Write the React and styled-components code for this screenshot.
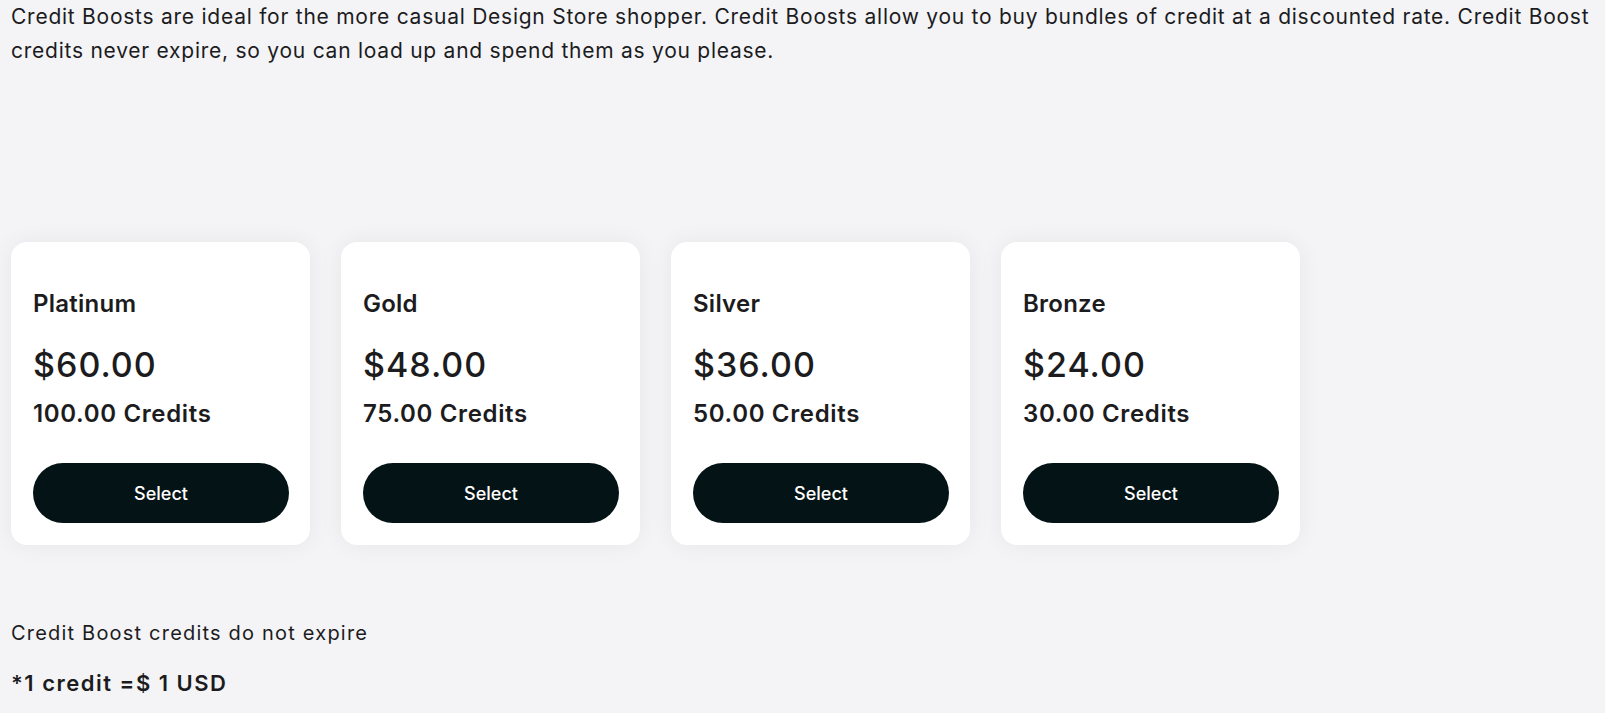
import React from "react";
import styled, { createGlobalStyle } from "styled-components";

const GlobalStyle = createGlobalStyle`
  html, body {
    margin: 0;
    padding: 0;
    background: #f4f4f7;
  }
  body {
    font-family: Inter, "Noto Sans", sans-serif;
    color: #1c1c1e;
  }
  * { box-sizing: border-box; }
`;

const Page = styled.main`
  padding: 0 11px 20px 11px;
  min-height: 713px;
`;

const Intro = styled.p`
  margin: 0;
  font-size: 21px;
  line-height: 34px;
  font-weight: 400;
  letter-spacing: 0.75px;
  color: #1c1c1e;
`;

const CardRow = styled.div`
  display: flex;
  gap: 31px;
  margin-top: 174px;
`;

const Card = styled.div`
  width: 299px;
  background: #ffffff;
  border-radius: 16px;
  padding: 47px 21px 22px 22px;
  box-shadow: 0 0 24px rgba(20, 20, 40, 0.06);
  display: flex;
  flex-direction: column;
`;

const Tier = styled.h3`
  margin: 0;
  font-size: 24px;
  line-height: 29px;
  font-weight: 600;
  letter-spacing: 0.25px;
  color: #1c1c1e;
`;

const Price = styled.div`
  margin-top: 26px;
  font-size: 34px;
  line-height: 41px;
  font-weight: 500;
  letter-spacing: 1px;
  color: #1c1c1e;
`;

const Credits = styled.div`
  margin-top: 14px;
  font-size: 24px;
  line-height: 29px;
  font-weight: 600;
  letter-spacing: 0.65px;
  color: #1c1c1e;
`;

const SelectButton = styled.button`
  margin-top: 35px;
  height: 60px;
  width: 100%;
  border: none;
  border-radius: 30px;
  background: #041316;
  color: #ffffff;
  font-family: Inter, "Noto Sans", sans-serif;
  font-size: 18px;
  font-weight: 500;
  cursor: pointer;
`;

const Note = styled.p`
  margin: 73px 0 0 0;
  font-size: 20px;
  line-height: 31px;
  font-weight: 400;
  letter-spacing: 1.2px;
`;

const Rate = styled.p`
  margin: 19px 0 0 0;
  font-size: 22px;
  line-height: 30px;
  font-weight: 600;
  letter-spacing: 1.5px;
`;

const tiers = [
  { name: "Platinum", price: "$60.00", credits: "100.00 Credits" },
  { name: "Gold", price: "$48.00", credits: "75.00 Credits" },
  { name: "Silver", price: "$36.00", credits: "50.00 Credits" },
  { name: "Bronze", price: "$24.00", credits: "30.00 Credits" },
];

export default function App() {
  return (
    <>
      <GlobalStyle />
      <Page>
        <Intro>
          Credit Boosts are ideal for the more casual Design Store shopper. Credit Boosts allow you to buy
          bundles of credit at a discounted rate. Credit Boost credits never expire, so you can load up and
          spend them as you please.
        </Intro>
        <CardRow>
          {tiers.map((t) => (
            <Card key={t.name}>
              <Tier>{t.name}</Tier>
              <Price>{t.price}</Price>
              <Credits>{t.credits}</Credits>
              <SelectButton>Select</SelectButton>
            </Card>
          ))}
        </CardRow>
        <Note>Credit Boost credits do not expire</Note>
        <Rate>*1 credit =$ 1 USD</Rate>
      </Page>
    </>
  );
}
